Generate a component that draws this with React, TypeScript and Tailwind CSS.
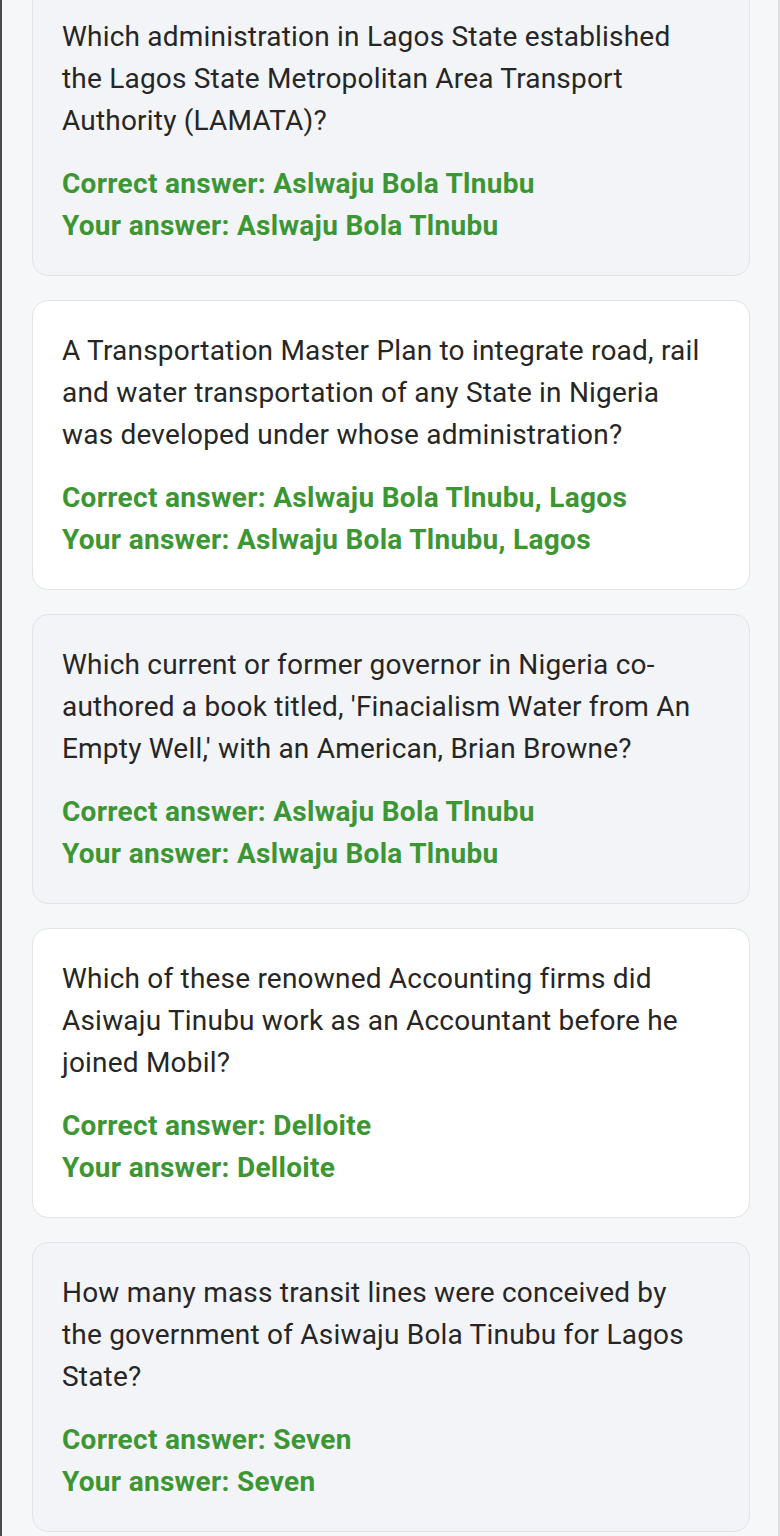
const items = [
  {
    question:
      "Which administration in Lagos State established the Lagos State Metropolitan Area Transport Authority (LAMATA)?",
    correct: "Aslwaju Bola Tlnubu",
    yours: "Aslwaju Bola Tlnubu",
  },
  {
    question:
      "A Transportation Master Plan to integrate road, rail and water transportation of any State in Nigeria was developed under whose administration?",
    correct: "Aslwaju Bola Tlnubu, Lagos",
    yours: "Aslwaju Bola Tlnubu, Lagos",
  },
  {
    question:
      "Which current or former governor in Nigeria co-authored a book titled, 'Finacialism Water from An Empty Well,' with an American, Brian Browne?",
    correct: "Aslwaju Bola Tlnubu",
    yours: "Aslwaju Bola Tlnubu",
  },
  {
    question:
      "Which of these renowned Accounting firms did Asiwaju Tinubu work as an Accountant before he joined Mobil?",
    correct: "Delloite",
    yours: "Delloite",
  },
  {
    question:
      "How many mass transit lines were conceived by the government of Asiwaju Bola Tinubu for Lagos State?",
    correct: "Seven",
    yours: "Seven",
  },
];

const QuestionCard = ({
  question,
  correct,
  yours,
  shaded,
}: {
  question: string;
  correct: string;
  yours: string;
  shaded: boolean;
}) => {
  return (
    <div
      className={`h-[290px] shrink-0 rounded-2xl border border-[#e1e3e7] pl-[29px] pr-[40px] pt-[29px] pb-[28px] ${
        shaded ? "bg-[#f3f4f8]" : "bg-white"
      }`}
    >
      <p className="text-[28px] leading-[42px] tracking-[0.2px] text-[#262626]">{question}</p>
      <div className="mt-[21px] text-[28px] leading-[42px] font-bold tracking-[0.3px] text-[#3c9634]">
        <p>Correct answer: {correct}</p>
        <p>Your answer: {yours}</p>
      </div>
    </div>
  );
};

export default function App() {
  return (
    <div
      className="h-[1536px] overflow-hidden border-l-2 border-r-2 border-l-[#4b4b4b] border-r-[#dcdde0] bg-[#f6f7f9] pl-[30px] pr-[28px]"
      style={{ fontFamily: "Roboto, 'Noto Sans', sans-serif" }}
    >
      <div className="-mt-[14px] flex flex-col gap-6">
        {items.map((item, i) => (
          <QuestionCard key={i} {...item} shaded={i % 2 === 0} />
        ))}
      </div>
    </div>
  );
}
